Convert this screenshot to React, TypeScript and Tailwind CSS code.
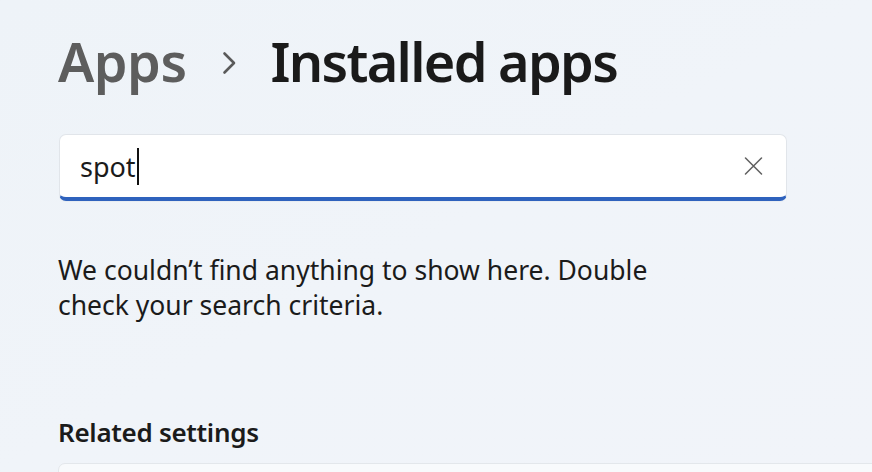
export default function App() {
    return (
        <div
            className="w-[872px] h-[472px] overflow-hidden bg-gradient-to-br from-[#eef3f8] via-[#f0f4f9] to-[#f1f4f9] text-[#1a1a1a]"
            style={{ fontFamily: '"Noto Sans", "Open Sans", sans-serif' }}
        >
            <div className="flex flex-col pl-[58px]">
                {/* Breadcrumb title */}
                <div className="flex items-center h-[64px] mt-[29px] text-[54px] font-semibold leading-none tracking-[-0.5px]">
                    <span className="text-[#5d5d5d]">Apps</span>
                    <svg className="ml-[35px] mr-[34px] mt-[4px]" width="15" height="24" viewBox="0 0 15 24" fill="none">
                        <path d="M2.5 2.5 L12 12 L2.5 21.5" stroke="#5a5a5a" strokeWidth="2.6" strokeLinecap="round" strokeLinejoin="round" />
                    </svg>
                    <span className="tracking-[-1.7px]">Installed apps</span>
                </div>

                {/* Search box */}
                <div className="mt-[41px] ml-[1px] w-[728px] h-[67px] rounded-[7px] bg-white border border-[#e1e5ea] border-b-[4px] border-b-[#2f62bd] flex items-center pl-[20px] pr-[23px] shadow-[0_1px_1px_rgba(0,0,0,0.03)]">
                    <span className="text-[27px] leading-none text-[#1b1b1b]">spot</span>
                    <span className="w-[2px] h-[37px] bg-[#111] ml-[1px]"></span>
                    <div className="flex-1"></div>
                    <svg width="19" height="18" viewBox="0 0 19 18" fill="none">
                        <path d="M1.5 1 L17.5 17 M17.5 1 L1.5 17" stroke="#5f5f5f" strokeWidth="1.5" strokeLinecap="round" />
                    </svg>
                </div>

                {/* Empty state message */}
                <p className="mt-[52px] w-[640px] text-[26.5px] leading-[35px] text-[#1b1b1b]">
                    We couldn’t find anything to show here. Double check your search criteria.
                </p>

                {/* Related settings */}
                <h2 className="mt-[92px] text-[26px] font-semibold leading-[35px] text-[#1b1b1b] tracking-[-0.3px]">Related settings</h2>
                <div className="mt-[13px] w-[830px] h-[60px] rounded-t-[7px] bg-[#f8fafc] border border-[#e3e7eb]"></div>
            </div>
        </div>
    )
}
